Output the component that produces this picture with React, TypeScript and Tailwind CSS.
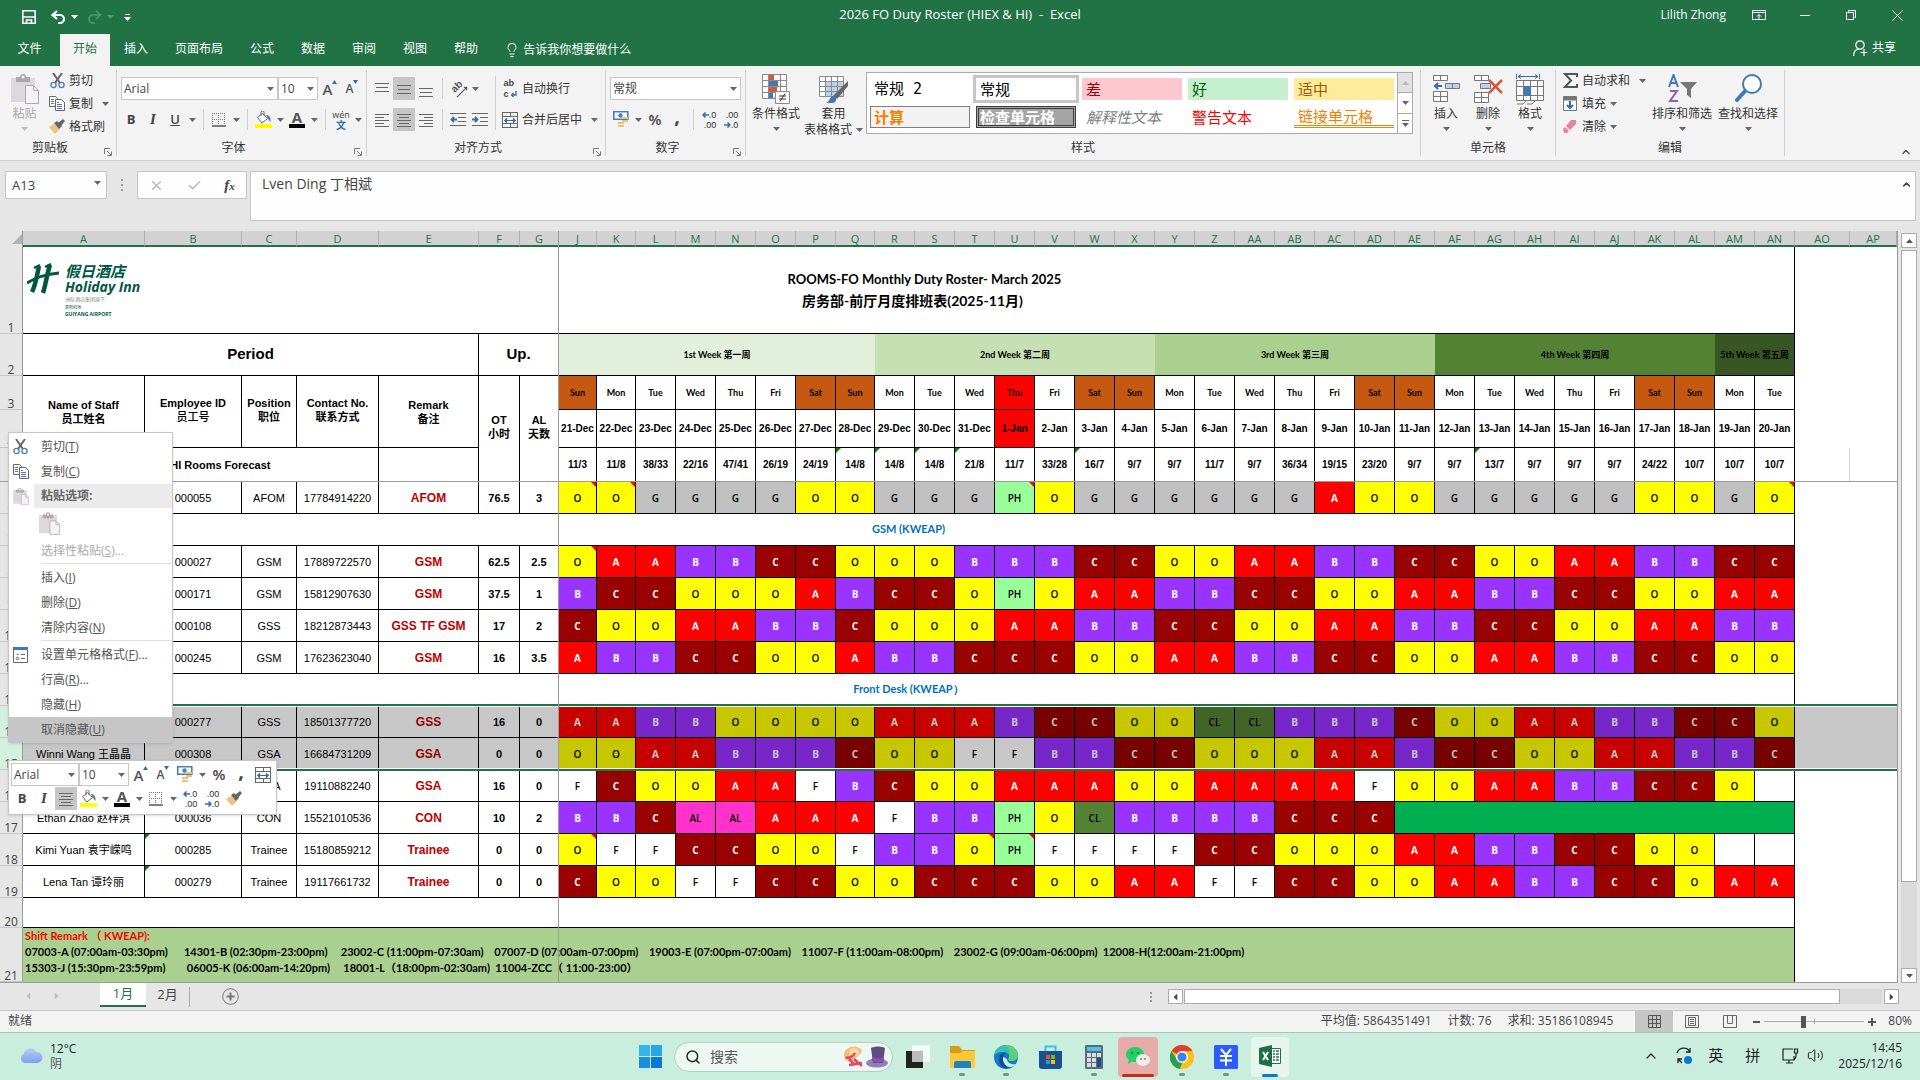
import React from "react";
import { ChevronUp, Lightbulb, Search, Volume2, X, Check } from "lucide-react";

/* ---------- data ---------- */

const cols = [
  "A", "B", "C", "D", "E", "F", "G", "J", "K", "L", "M", "N", "O", "P", "Q", "R", "S", "T", "U", "V", "W", "X",
  "Y", "Z", "AA", "AB", "AC", "AD", "AE", "AF", "AG", "AH", "AI", "AJ", "AK", "AL", "AM", "AN", "AO", "AP",
];

const dayNames = ["Sun", "Mon", "Tue", "Wed", "Thu", "Fri", "Sat"];
const days = Array.from({ length: 31 }, (_, i) => ({
  name: dayNames[i % 7],
  date: i < 11 ? `${21 + i}-Dec` : `${i - 10}-Jan`,
  holiday: i === 11,
}));

const forecast =
  "11/3 11/8 38/33 22/16 47/41 26/19 24/19 14/8 14/8 14/8 21/8 11/7 33/28 16/7 9/7 9/7 11/7 9/7 36/34 19/15 23/20 9/7 9/7 13/7 9/7 9/7 9/7 24/22 10/7 10/7 10/7".split(" ");
const forecastFlags = [7, 8, 9, 10, 13, 23];

const weeks = [
  { label: "1st Week 第一周", span: 8, cls: "bg-[#e2efda]" },
  { label: "2nd Week 第二周", span: 7, cls: "bg-[#c6e0b4]" },
  { label: "3rd Week 第三周", span: 7, cls: "bg-[#a9d08e]" },
  { label: "4th Week 第四周", span: 7, cls: "bg-[#548235]" },
  { label: "5th Week 第五周", span: 2, cls: "bg-[#375623]" },
];

const codeColors: Record<string, string> = {
  O: "bg-[#ffff00] text-black",
  G: "bg-[#c0c0c0] text-black",
  A: "bg-[#ff0000] text-white",
  B: "bg-[#9933ff] text-white",
  C: "bg-[#990000] text-white",
  F: "bg-white text-black",
  PH: "bg-[#99ff99] text-black",
  CL: "bg-[#548235] text-black",
  AL: "bg-[#ff33cc] text-black",
  _: "bg-white",
};

interface Staff {
  row: string;
  name: string;
  id: string;
  position: string;
  phone: string;
  remark: string;
  ot: string;
  al: string;
  shifts: string;
  notes?: number[];
  flag?: boolean;
  selected?: boolean;
  leave?: number;
}

const managers: Staff[] = [
  { row: "8", name: "", id: "000027", position: "GSM", phone: "17889722570", remark: "GSM", ot: "62.5", al: "2.5", notes: [0], shifts: "O A A B B C C O O O B B B C C O O A A B B C C O O A A B B C C" },
  { row: "9", name: "", id: "000171", position: "GSM", phone: "15812907630", remark: "GSM", ot: "37.5", al: "1", shifts: "B C C O O O A B C C O PH O A A B B C C O O A A B B C C O O A A" },
  { row: "10", name: "", id: "000108", position: "GSS", phone: "18212873443", remark: "GSS TF GSM", ot: "17", al: "2", shifts: "C O O A A B B C O O O A A B B C C O O A A B B C C O O A A B B" },
  { row: "11", name: "", id: "000245", position: "GSM", phone: "17623623040", remark: "GSM", ot: "16", al: "3.5", shifts: "A B B C C O O A B B C C C O O A A B B C C O O A A B B C C O O" },
];

const frontDesk: Staff[] = [
  { row: "13", name: "Lven Ding 丁相斌", id: "000277", position: "GSS", phone: "18501377720", remark: "GSS", ot: "16", al: "0", selected: true, shifts: "A A B B O O O O A A A B C C O O CL CL B B B C O O A A B B C C O" },
  { row: "15", name: "Winni Wang 王晶晶", id: "000308", position: "GSA", phone: "16684731209", remark: "GSA", ot: "0", al: "0", selected: true, shifts: "O O A A B B B C O O F F B B C C O O O A A B C C O O A A B B C" },
  { row: "16", name: "", id: "", position: "GSA", phone: "19110882240", remark: "GSA", ot: "16", al: "0", shifts: "F C O O A A F B C O O A A A O O A A A A F O O A A B B C C O _" },
  { row: "17", name: "Ethan Zhao 赵梓淇", id: "000036", position: "CON", phone: "15521010536", remark: "CON", ot: "10", al: "2", leave: 10, shifts: "B B C AL AL A A A F B B PH O CL B B B B C C C" },
  { row: "18", name: "Kimi Yuan 袁宇嵘鸣", id: "000285", position: "Trainee", phone: "15180859212", remark: "Trainee", ot: "0", al: "0", notes: [0, 10, 11], flag: true, shifts: "O F F C C O O F B B O PH F F F F C C O O O A A B B C C O O _ _" },
  { row: "19", name: "Lena Tan 谭玲丽", id: "000279", position: "Trainee", phone: "19117661732", remark: "Trainee", ot: "0", al: "0", flag: true, shifts: "C O O F F C C O O C C C O O A A F F C C O O A A B B C C O A A" },
];

const dutyManager: Staff = {
  row: "6", name: "", id: "000055", position: "AFOM", phone: "17784914220", remark: "AFOM", ot: "76.5", al: "3", notes: [0, 1, 11, 30],
  shifts: "O O G G G G O O G G G PH O G G G G G G A O O G G G G G O O G O",
};

/* ---------- small pieces ---------- */

const Caret = ({ className = "" }: { className?: string }) => (
  <svg width="7" height="4" viewBox="0 0 7 4" className={`shrink-0 ${className}`} fill="currentColor">
    <path d="M0 0h7L3.5 4z" />
  </svg>
);

const CaretButton = ({ label }: { label: string }) => (
  <button aria-label={label} className="flex h-[22px] w-3 shrink-0 items-center justify-center text-[#666]">
    <Caret />
  </button>
);

const Tool = ({ label, active, children }: { label: string; active?: boolean; children: React.ReactNode }) => (
  <button
    aria-label={label}
    className={`flex h-[23px] w-[22px] shrink-0 items-center justify-center text-[#444] ${active ? "bg-[#c6c6c6]" : ""}`}
  >
    {children}
  </button>
);

const Sep = () => <span className="mr-1 ml-[5px] h-[21px] w-px shrink-0 bg-[#d0d0d0]" />;

const Lines = ({ rows, align = "center" }: { rows: [number, number][]; align?: string }) => (
  <svg width="14" height="16" viewBox="0 0 14 16" stroke="#666" shapeRendering="crispEdges">
    {rows.map(([y, w]) => {
      const x = align === "left" ? 0 : align === "right" ? 14 - w : (14 - w) / 2;
      return <path key={y} d={`M${x} ${y}.5h${w}`} />;
    })}
  </svg>
);

const CutIcon = () => (
  <svg width="15" height="16" viewBox="0 0 15 16" fill="none">
    <path d="M3 0l7 10M12 0L5 10" stroke="#666" strokeWidth="2" />
    <circle cx="3.5" cy="12" r="2.6" stroke="#4a7ebb" strokeWidth="1.3" />
    <circle cx="11.5" cy="12" r="2.6" stroke="#4a7ebb" strokeWidth="1.3" />
  </svg>
);

const CopyIcon = () => (
  <svg width="16" height="15" viewBox="0 0 16 15" fill="#fff" stroke="#666">
    <path d="M.5.5h6l2 2v8h-8z" />
    <path d="M2 3.5h3M2 5.5h3M2 7.5h3" stroke="#4a7ebb" />
    <path d="M6.5 3.5h6l3 3v8h-9z" />
    <path d="M8 8.5h5M8 10.5h5M8 12.5h5M8 6.5h2" stroke="#4a7ebb" />
  </svg>
);

const BrushIcon = () => (
  <svg width="16" height="15" viewBox="0 0 16 15">
    <path d="M0 8l5-3 6 5-5 5z" fill="#ecc37e" />
    <path d="M5 4l3-2 5 5-3 3z" fill="#666" />
    <path d="M9 4l5-4 2 2-4 5z" fill="#666" />
  </svg>
);

const PasteIcon = ({ size = "large" }: { size?: "small" | "medium" | "large" }) => {
  const width = { small: 16, medium: 21, large: 28 }[size];
  return (
    <svg width={width} height={Math.round((width * 30) / 28)} viewBox="0 0 28 30">
      <path d="M0 4h24v24H0z" fill="#dcd8dc" />
      <path d="M5 3h4a3 3 0 016 0h4v5H5z" fill="#a9a9a9" />
      <circle cx="12" cy="3" r="1.5" fill="#f3f3f3" />
      <path d="M14.5 11.5h8l5 5v13h-13z" fill="#f7f0f7" stroke="#a9a9a9" />
      <path d="M22.5 11.5v5h5" fill="none" stroke="#a9a9a9" />
    </svg>
  );
};

const GrowFont = ({ down }: { down?: boolean }) => (
  <span className="flex h-[18px] items-end text-[#555]">
    <span className={`font-['Open_Sans',sans-serif] leading-[18px] font-semibold ${down ? "text-[12px]" : "text-[15px]"}`}>A</span>
    <svg width="5" height="4" viewBox="0 0 5 4" className="self-start" fill="#2f6fb5">
      <path d={down ? "M0 0h5L2.5 4z" : "M0 4h5L2.5 0z"} />
    </svg>
  </span>
);

const BorderIcon = () => (
  <svg width="14" height="14" viewBox="0 0 14 14" stroke="#777" fill="none">
    <path d="M.5 0v12M6.5 0v12M12.5 0v12M0 .5h13M0 6.5h13" strokeDasharray="1 1" />
    <path d="M0 13h14" stroke="#555" strokeWidth="1.5" />
  </svg>
);

const FillIcon = () => (
  <svg width="17" height="17" viewBox="0 0 17 17">
    <path d="M2.5 6.5l5-4 5 5-5.5 4.5z" fill="#fff" stroke="#666" />
    <path d="M6 5V1.5a1.5 1.5 0 013 0V5" fill="none" stroke="#666" />
    <path d="M11 4c3 0 5 2 4.5 7-1.5-1-2-3-3-4z" fill="#4a7ebb" />
    <path d="M0 13h17v4H0z" fill="#ff0" />
  </svg>
);

const FontColor = () => (
  <span className="flex flex-col items-center">
    <span className="h-[13px] font-['Open_Sans',sans-serif] text-[15px] leading-[13px] font-bold text-[#555]">A</span>
    <span className="h-1 w-4 bg-black" />
  </span>
);

const MoneyIcon = () => (
  <svg width="16" height="17" viewBox="0 0 16 17">
    <path d="M.8.8h14v7.5H.8z" fill="#fff" stroke="#4a7ebb" strokeWidth="1.6" />
    <circle cx="7.5" cy="4.5" r="2.2" fill="#4a7ebb" />
    <path d="M9 6h6v2H9zM9 9h6v2H9zM5 11h6v2H5zM5 14h6v2H5z" fill="#ecc37e" />
  </svg>
);

const Arrow = ({ right }: { right?: boolean }) => (
  <svg width="7" height="6" viewBox="0 0 7 6" className={right ? "rotate-180" : ""} fill="none" stroke="#2f6fb5" strokeWidth="1.5">
    <path d="M7 3H1M3.5.5L1 3l2.5 2.5" />
  </svg>
);

const Decimal = ({ up }: { up?: boolean }) => (
  <span className="flex flex-col items-end font-['Liberation_Sans',sans-serif] text-[9px] leading-[10px] text-[#333]">
    <span className="flex items-center">
      {up && <Arrow />}
      {up ? ".0" : ".00"}
    </span>
    <span className="flex items-center">
      {!up && <Arrow right />}
      {up ? ".00" : ".0"}
    </span>
  </span>
);

const MergeIcon = () => (
  <svg width="16" height="16" viewBox="0 0 16 16" fill="none" stroke="#666" shapeRendering="crispEdges">
    <path d="M.5.5h15v15H.5zM.5 4.5h15M.5 11.5h15M8 .5v4M8 11.5v4" />
    <path d="M3 8.5h10M5 6.5l-2 2 2 2M11 6.5l2 2-2 2" stroke="#2f6fb5" />
  </svg>
);

const WrapIcon = () => (
  <span className="flex flex-col items-start font-['Liberation_Sans',sans-serif] text-[9px] leading-[11px] font-bold text-[#444]">
    <span>ab</span>
    <span className="flex items-center gap-px">
      c
      <svg width="7" height="7" viewBox="0 0 7 7" fill="none" stroke="#2f6fb5" strokeWidth="1.3">
        <path d="M6 0v4H1.500M3.500 2l-2 2 2 2" />
      </svg>
    </span>
  </span>
);

const IndentIcon = ({ out }: { out?: boolean }) => (
  <svg width="16" height="14" viewBox="0 0 16 14" stroke="#666" fill="none">
    <path d="M0 .5h16M8 4.5h8M8 8.5h8M0 12.5h16" />
    <path d={out ? "M1 6.5h6M4 4L1.5 6.5 4 9" : "M0 6.5h6M3 4l2.5 2.5L3 9"} stroke="#2f6fb5" strokeWidth="1.8" />
  </svg>
);

const Launcher = ({ label }: { label: string }) => (
  <button aria-label={label} className="absolute right-1 bottom-0">
    <svg width="8" height="8" viewBox="0 0 8 8" stroke="#777" fill="none">
      <path d="M.5 6V.5H6M3 3l4 4M7.5 3.5v4h-4" />
    </svg>
  </button>
);

const Group = ({ title, width, launcher, children }: { title: string; width: string; launcher?: boolean; children: React.ReactNode }) => (
  <section className={`relative flex h-[86px] shrink-0 flex-col border-r border-[#d0d0d0] ${width}`}>
    <div className="flex h-[73px]">{children}</div>
    <h2 className={`text-center text-[12px] leading-4 text-[#333] ${launcher ? "pr-4" : ""}`}>{title}</h2>
    {launcher && <Launcher label={`${title}设置`} />}
  </section>
);

const SmallCommand = ({ icon, text, caret, wide }: { icon: React.ReactNode; text: string; caret?: boolean; wide?: boolean }) => (
  <button className="flex h-[23px] items-center text-[12px] whitespace-nowrap text-[#333]">
    <span className="mr-1 flex w-4 justify-center">{icon}</span>
    {text}
    {caret && <Caret className={wide ? "ml-[9px] text-[#666]" : "ml-1 text-[#666]"} />}
  </button>
);

const BigCommand = ({ icon, text, width, muted }: { icon: React.ReactNode; text: string; width: string; muted?: boolean }) => (
  <button className={`flex shrink-0 flex-col items-center justify-start pt-1 text-[12px] leading-4 whitespace-nowrap ${width} ${muted ? "text-[#aaa]" : "text-[#333]"}`}>
    <span className="flex h-8 items-start">{icon}</span>
    {text}
    <Caret className={`mt-[5px] ${muted ? "text-[#c0c0c0]" : "text-[#666]"}`} />
  </button>
);

const FakeSelect = ({ label, value, width }: { label: string; value: string; width: string }) => (
  <span className={`relative flex h-[23px] shrink-0 items-center ${width}`}>
    <select
      aria-label={label}
      className="h-full w-full appearance-none border border-[#c6c6c6] bg-white px-[2px] text-[12px] leading-4 text-[#444]"
    >
      <option>{value}</option>
    </select>
    <Caret className="pointer-events-none absolute right-1 text-[#666]" />
  </span>
);

/* ---------- title bar and ribbon ---------- */

const TitleBar = () => (
  <header className="grid h-[34px] grid-cols-[1fr_auto_1fr] items-start bg-[#217346] text-white">
    <div className="flex h-[34px] items-center pl-[22px]">
      <button aria-label="保存">
        <svg width="14" height="14" viewBox="0 0 14 14" fill="none" stroke="#fff" strokeWidth="1.6">
          <path d="M.8.8h12.4v12.4H.8zM1 7h12M4.5 13v-3h5v3" />
        </svg>
      </button>
      <button aria-label="撤消" className="ml-[15px] flex items-center">
        <svg width="15" height="14" viewBox="0 0 15 14" fill="none" stroke="#fff" strokeWidth="2.2">
          <path d="M6 1L1.5 5 6 9M2 5h7a4 4 0 010 8H7" />
        </svg>
        <Caret className="ml-[5px]" />
      </button>
      <button aria-label="恢复" className="ml-[9px] flex items-center text-[#4f9a72]">
        <svg width="15" height="14" viewBox="0 0 15 14" fill="none" stroke="currentColor" strokeWidth="1.6">
          <path d="M9 1l4.5 4L9 9M13 5H6a4 4 0 000 8h2" />
        </svg>
        <Caret className="ml-[5px]" />
      </button>
      <button aria-label="自定义快速访问工具栏" className="ml-[10px] flex flex-col items-center gap-[2px]">
        <span className="h-px w-[5px] bg-white" />
        <Caret />
      </button>
    </div>
    <h1 className="mt-[5px] text-[13px] leading-[18px] whitespace-pre">2026 FO Duty Roster (HIEX &amp; HI)  -  Excel</h1>
    <div className="flex h-[30px] items-center justify-end pr-[17px]">
      <span className="mr-[26px] text-[12px]">Lilith Zhong</span>
      <button aria-label="功能区显示选项" className="mr-[34px]">
        <svg width="14" height="10" viewBox="0 0 14 10" fill="none" stroke="#fff">
          <path d="M.5.5h13v9H.5zM.5 2.5h13M7 9V4.5M5 6.5l2-2 2 2" />
        </svg>
      </button>
      <button aria-label="最小化" className="mr-9 h-px w-[10px] bg-white" />
      <button aria-label="还原" className="mr-9">
        <svg width="10" height="10" viewBox="0 0 10 10" fill="none" stroke="#fff">
          <path d="M.5 2.5h7v7h-7zM2.5 2.5v-2h7v7h-2" />
        </svg>
      </button>
      <button aria-label="关闭">
        <svg width="11" height="11" viewBox="0 0 11 11" stroke="#fff">
          <path d="M.5.5l10 10M10.5.5l-10 10" />
        </svg>
      </button>
    </div>
  </header>
);

const ribbonTabs = ["开始", "插入", "页面布局", "公式", "数据", "审阅", "视图", "帮助"];

const RibbonTabs = () => (
  <nav className="flex h-8 items-stretch gap-px bg-[#217346] text-[12px] text-white">
    <button className="w-[59px] pb-[2px]">文件</button>
    {ribbonTabs.map((t) => (
      <button key={t} className={`px-[13px] pb-[2px] ${t === "开始" ? "bg-[#f3f3f3] text-[#217346]" : ""}`}>
        {t}
      </button>
    ))}
    <button className="flex items-center pl-3">
      <Lightbulb size={16} strokeWidth={1.5} className="mr-[3px]" />
      告诉我你想要做什么
    </button>
    <button className="mr-6 ml-auto flex items-center gap-1 pb-1">
      <svg width="15" height="17" viewBox="0 0 15 17" fill="none" stroke="#fff" strokeWidth="1.2">
        <circle cx="7" cy="5" r="4.2" />
        <path d="M.6 16c0-4 2-6.5 5-7M11 9v7M7.5 12.5h7" />
      </svg>
      共享
    </button>
  </nav>
);

const Gallery = () => (
  <div className="mt-[2px] ml-[5px] flex h-[62px] border border-[#ababab] bg-white font-['Noto_Sans_CJK_SC',sans-serif] text-[15px] leading-5">
    <div className="grid grid-cols-5 gap-x-[6px] gap-y-[6px] px-[3px] py-[5px]">
      <button className="h-[22px] w-[100px] px-1 text-left font-['DejaVu_Sans_Mono','Noto_Sans_CJK_SC',monospace] text-black">常规 2</button>
      <button className="h-[22px] w-[100px] px-1 text-left text-black outline-[3px] outline-[#c6c6c6]">常规</button>
      <button className="h-[22px] w-[100px] bg-[#ffc7ce] px-1 text-left text-[#9c0006]">差</button>
      <button className="h-[22px] w-[100px] bg-[#c6efce] px-1 text-left text-[#006100]">好</button>
      <button className="h-[22px] w-[100px] bg-[#ffeb9c] px-1 text-left text-[#9c5700]">适中</button>
      <button className="h-[22px] w-[100px] border border-[#7f7f7f] bg-[#f2f2f2] px-[3px] text-left leading-4 font-bold text-[#fa7d00]">计算</button>
      <button className="h-[22px] w-[100px] border-3 border-double border-[#3f3f3f] bg-[#a5a5a5] px-px text-left leading-4 font-bold text-white">检查单元格</button>
      <button className="h-[22px] w-[100px] px-1 text-left leading-4 text-[#7f7f7f] italic">解释性文本</button>
      <button className="h-[22px] w-[100px] px-1 text-left leading-4 text-[#ff0000]">警告文本</button>
      <button className="h-[22px] w-[100px] border-b-3 border-double border-[#ff8001] px-1 text-left leading-4 text-[#fa7d00]">链接单元格</button>
    </div>
    <div className="flex w-[15px] flex-col border-l border-[#ababab] text-[#666]">
      <button aria-label="上一行" className="flex flex-1 items-center justify-center border-b border-[#ababab] bg-[#e1e1e1] text-[#bbb]">
        <Caret className="rotate-180" />
      </button>
      <button aria-label="下一行" className="flex flex-1 items-center justify-center border-b border-[#ababab]">
        <Caret />
      </button>
      <button aria-label="其他" className="flex flex-1 flex-col items-center justify-center gap-[2px]">
        <span className="h-px w-[7px] bg-[#666]" />
        <Caret />
      </button>
    </div>
  </div>
);

const Ribbon = () => (
  <div className="flex h-[95px] border-b border-[#d0d0d0] bg-[#f3f3f3] pt-1">
    <Group title="剪贴板" width="w-[117px]" launcher>
      <BigCommand width="w-[49px]" muted text="粘贴" icon={<PasteIcon />} />
      <div className="-mt-px flex flex-col items-start">
        <SmallCommand icon={<CutIcon />} text="剪切" />
        <SmallCommand icon={<CopyIcon />} text="复制" caret wide />
        <SmallCommand icon={<BrushIcon />} text="格式刷" />
      </div>
    </Group>

    <Group title="字体" width="w-[250px]" launcher>
      <div className="flex flex-col gap-2 pt-[7px] pl-1">
        <div className="flex items-center">
          <FakeSelect label="字体" value="Arial" width="w-[157px]" />
          <FakeSelect label="字号" value="10" width="w-10" />
          <span className="w-px" />
          <Tool label="增大字号"><GrowFont /></Tool>
          <Tool label="减小字号"><GrowFont down /></Tool>
        </div>
        <div className="-ml-px flex items-center">
          <Tool label="加粗"><b className="text-[13px]">B</b></Tool>
          <Tool label="倾斜"><i className="font-['Liberation_Serif',serif] text-[15px] font-bold">I</i></Tool>
          <Tool label="下划线"><span className="text-[13px] font-semibold underline">U</span></Tool>
          <CaretButton label="下划线选项" />
          <Sep />
          <Tool label="边框"><BorderIcon /></Tool>
          <CaretButton label="边框选项" />
          <Sep />
          <Tool label="填充颜色"><FillIcon /></Tool>
          <CaretButton label="填充颜色选项" />
          <Tool label="字体颜色"><FontColor /></Tool>
          <CaretButton label="字体颜色选项" />
          <Sep />
          <Tool label="拼音">
            <span className="flex flex-col items-center text-[9px] leading-[11px]">
              wén<b className="text-[10px] leading-[11px] text-[#2f6fb5]">文</b>
            </span>
          </Tool>
          <CaretButton label="拼音选项" />
        </div>
      </div>
    </Group>

    <Group title="对齐方式" width="w-[239px]" launcher>
      <div className="flex flex-col gap-2 pt-[7px] pl-1">
        <div className="flex items-center">
          <Tool label="顶端对齐"><Lines rows={[[2, 14], [6, 12], [10, 14]]} /></Tool>
          <Tool label="垂直居中" active><Lines rows={[[4, 14], [8, 12], [12, 14]]} /></Tool>
          <Tool label="底端对齐"><Lines rows={[[7, 14], [11, 12], [15, 14]]} /></Tool>
          <Sep />
          <Tool label="方向">
            <span className="flex -rotate-45 flex-col items-center font-['Liberation_Sans',sans-serif] text-[10px] leading-[10px] font-bold text-[#555]">
              ab
              <svg width="15" height="5" viewBox="0 0 15 5" fill="none" stroke="#555" strokeWidth="1.2">
                <path d="M0 2.5h14M12 .5l2 2-2 2" />
              </svg>
            </span>
          </Tool>
          <CaretButton label="方向选项" />
        </div>
        <div className="flex items-center">
          <Tool label="左对齐"><Lines align="left" rows={[[2, 14], [5, 9], [8, 14], [11, 9], [14, 14]]} /></Tool>
          <Tool label="居中" active><Lines rows={[[2, 14], [5, 10], [8, 14], [11, 10], [14, 14]]} /></Tool>
          <Tool label="右对齐"><Lines align="right" rows={[[2, 14], [5, 9], [8, 14], [11, 9], [14, 14]]} /></Tool>
          <Sep />
          <Tool label="减少缩进量"><IndentIcon out /></Tool>
          <Tool label="增加缩进量"><IndentIcon /></Tool>
        </div>
      </div>
      <span className="mt-[6px] ml-1 h-[54px] w-px bg-[#d0d0d0]" />
      <div className="ml-[6px] flex flex-col items-start gap-2 pt-[7px]">
        <SmallCommand text="自动换行" icon={<WrapIcon />} />
        <SmallCommand text="合并后居中" icon={<MergeIcon />} caret wide />
      </div>
    </Group>

    <Group title="数字" width="w-[140px]" launcher>
      <div className="flex flex-col gap-2 pt-[7px] pl-1">
        <FakeSelect label="数字格式" value="常规" width="w-[131px]" />
        <div className="flex items-center">
          <Tool label="会计数字格式"><MoneyIcon /></Tool>
          <CaretButton label="会计数字格式选项" />
          <Tool label="百分比样式"><span className="text-[15px] font-semibold">%</span></Tool>
          <Tool label="千位分隔样式"><span className="pb-2 text-[20px] leading-3 font-bold">,</span></Tool>
          <Sep />
          <Tool label="增加小数位数"><Decimal up /></Tool>
          <Tool label="减少小数位数"><Decimal /></Tool>
        </div>
      </div>
    </Group>

    <Group title="样式" width="w-[675px]">
      <BigCommand
        width="w-[60px]"
        text="条件格式"
        icon={
          <svg width="30" height="30" viewBox="0 0 30 30" stroke="#8a8a8a" fill="#fff">
            <path d="M1.5.5h24v24h-24z" />
            <path d="M8 1h5v5H8zM8 13h8v5H8z" fill="#d2593c" stroke="none" />
            <path d="M8 7h9v5H8zM8 19h4v5H8z" fill="#3f79ba" stroke="none" />
            <path d="M1.5 6.5h24M1.5 12.5h24M1.5 18.5h24M7.5.5v24M19.5.5v24" fill="none" />
            <path d="M14.5 17.5h14v12h-14z" />
            <path d="M18 22h7M18 25h7M24 19.5l-5 8" stroke="#333" />
          </svg>
        }
      />
      <button className="flex w-[55px] flex-col items-center justify-start pt-1 text-[12px] leading-4 whitespace-nowrap text-[#333]">
        <span className="flex h-8 items-start">
          <svg width="30" height="30" viewBox="0 0 30 30" stroke="#8a8a8a" fill="#fff">
            <path d="M.5 2.5h24v20H.5z" />
            <path d="M7 8h17v14H7z" fill="#bdd2ea" stroke="none" />
            <path d="M.5 7.5h24M.5 12.5h24M.5 17.5h24M6.5 2.5v20M12.5 2.5v20M18.5 2.5v20" fill="none" />
            <path d="M29 7v5L18 25l-4-3z" fill="#666" stroke="none" />
            <path d="M7 29c4-1 3-7 8-7 3 2 3 6-1 7z" fill="#3f79ba" stroke="none" />
          </svg>
        </span>
        套用
        <span className="flex items-center gap-1">
          表格格式
          <Caret className="text-[#666]" />
        </span>
      </button>
      <Gallery />
    </Group>

    <Group title="单元格" width="w-[135px]">
      <span className="w-1" />
      <BigCommand
        width="w-[42px]"
        text="插入"
        icon={
          <svg width="27" height="30" viewBox="0 0 27 30" stroke="#777" fill="#fff">
            <path d="M.5 1.5h14v5H.5zM7.5 1.5v5M.5 17.5h14v10H.5zM7.5 17.5v10M.5 22.5h14" />
            <path d="M12.5 9.5h14v5h-14zM19.5 9.5v5" fill="#bdd2ea" />
            <path d="M9 12H2M5 9l-3 3 3 3" stroke="#2f6fb5" strokeWidth="2" fill="none" />
          </svg>
        }
      />
      <BigCommand
        width="w-[42px]"
        text="删除"
        icon={
          <svg width="29" height="30" viewBox="0 0 29 30" stroke="#777" fill="#fff">
            <path d="M.5 1.5h14v5H.5zM7.5 1.5v5M.5 18.5h14v10H.5zM7.5 18.5v10M.5 23.5h14" />
            <path d="M6.5 9.5h10v5h-10z" fill="#bdd2ea" />
            <path d="M15 6l13 13M28 6L15 19" stroke="#d9573b" strokeWidth="2.5" />
          </svg>
        }
      />
      <BigCommand
        width="w-[42px]"
        text="格式"
        icon={
          <svg width="28" height="32" viewBox="0 0 28 32" stroke="#777" fill="#fff">
            <path d="M.5 6.5h27v20H.5zM.5 12.5h27M.5 21.5h27M7.5 6.5v20M14.5 6.5v20M21.5 6.5v20" />
            <path d="M8 12h7v10H8z" fill="#3f79ba" stroke="none" />
            <path d="M1 30h6l3-3M11 30h5l3-3" fill="none" />
            <path d="M.5 0v5M23.5 0v5M2 2.5h20M5 .5l-3 2 3 2M19 .5l3 2-3 2" stroke="#2f6fb5" fill="none" />
          </svg>
        }
      />
    </Group>

    <Group title="编辑" width="w-[229px]">
      <div className="-mt-px flex w-[88px] flex-col items-start pl-[6px]">
        <SmallCommand
          text="自动求和"
          caret
          wide
          icon={
            <svg width="15" height="15" viewBox="0 0 15 15" fill="none" stroke="#555" strokeWidth="2">
              <path d="M14 4V1H2l6 6.5L2 14h12v-3" />
            </svg>
          }
        />
        <SmallCommand
          text="填充"
          caret
          icon={
            <svg width="14" height="15" viewBox="0 0 14 15" fill="#fff" stroke="#777">
              <path d="M.5.5h13v14H.5z" />
              <path d="M1 1h12v3H1z" fill="#777" />
              <path d="M7 5v7M4 9l3 3 3-3" stroke="#2f6fb5" strokeWidth="2" fill="none" />
            </svg>
          }
        />
        <SmallCommand
          text="清除"
          caret
          icon={
            <svg width="14" height="13" viewBox="0 0 14 13">
              <path d="M8 0h5v4L7 10 3 6z" fill="#e8849a" />
              <path d="M2 7l4 4-2 2H1L0 9z" fill="#e8849a" />
            </svg>
          }
        />
      </div>
      <BigCommand
        width="w-[76px]"
        text="排序和筛选"
        icon={
          <svg width="29" height="29" viewBox="0 0 29 29" fill="none" strokeWidth="2">
            <path d="M1 13L5.5 1 10 13M2.5 9h6" stroke="#3f79ba" />
            <path d="M2 17h7l-7 10h8" stroke="#8d5fb5" />
            <path d="M12 8h17l-6 7v9l-4-3v-6z" fill="#777" />
          </svg>
        }
      />
      <BigCommand
        width="w-[56px]"
        text="查找和选择"
        icon={
          <svg width="27" height="28" viewBox="0 0 27 28" fill="#fff">
            <path d="M2 26l9-10" stroke="#3f79ba" strokeWidth="4" strokeLinecap="round" />
            <circle cx="17" cy="10" r="9" stroke="#3f79ba" strokeWidth="2" />
          </svg>
        }
      />
    </Group>
    <button aria-label="折叠功能区" className="mr-2 mb-[2px] ml-auto self-end text-[#555]">
      <ChevronUp size={12} strokeWidth={3} />
    </button>
  </div>
);

const FormulaBar = () => (
  <div className="flex items-start bg-[#e6e6e6] py-[10px] pr-1 pl-[5px] text-[#444]">
    <div className="relative flex h-7 w-[102px] items-center">
      <input aria-label="名称框" defaultValue="A13" className="h-full w-full border border-[#c6c6c6] bg-[#fdfdfd] px-[6px] text-[13px]" />
      <Caret className="pointer-events-none absolute right-[6px] mb-1 text-[#666]" />
    </div>
    <span className="flex h-7 w-[30px] flex-col items-center justify-center gap-[3px]">
      <i className="size-[2px] bg-[#999]" />
      <i className="size-[2px] bg-[#999]" />
      <i className="size-[2px] bg-[#999]" />
    </span>
    <div className="flex h-7 w-[110px] items-center justify-around border border-[#c6c6c6] bg-[#fdfdfd]">
      <button aria-label="取消" className="text-[#bbb]"><X size={15} strokeWidth={2.5} /></button>
      <button aria-label="输入" className="text-[#bbb]"><Check size={15} strokeWidth={2.5} /></button>
      <button aria-label="插入函数" className="font-['Liberation_Serif',serif] text-[15px] leading-4 font-bold italic">
        f<span className="text-[11px]">x</span>
      </button>
    </div>
    <div className="ml-[3px] flex h-[50px] flex-1 items-start border border-[#c6c6c6] bg-[#fdfdfd]">
      <textarea
        aria-label="编辑栏"
        defaultValue="Lven Ding 丁相斌"
        className="h-full flex-1 resize-none px-[11px] pt-[3px] text-[14px] leading-[18px] outline-none"
      />
      <ChevronUp size={11} strokeWidth={3.5} className="mt-[7px] mr-[3px]" />
    </div>
  </div>
);

/* ---------- sheet ---------- */

const cell = "border-r border-b border-black text-center";

const RowHead = ({ n, selected }: { n: string; selected?: boolean }) => (
  <th
    scope="row"
    className={`border-r border-b border-r-[#9b9b9b] border-b-[#c6c6c6] text-center align-bottom font-['Open_Sans',sans-serif] text-[12px] leading-[11px] font-normal ${
      selected ? "bg-[#d3f0e0] text-[#217346]" : "bg-[#e6e6e6] text-[#444]"
    }`}
  >
    {n}
  </th>
);

const Outside = () => (
  <>
    <td />
    <td />
  </>
);

const GreenFlag = () => (
  <span className="absolute top-0 left-0 border-t-[5px] border-r-[5px] border-t-[#0a7d0a] border-r-transparent" />
);

const RedFlag = () => (
  <span className="absolute top-0 right-0 border-t-[5px] border-l-[5px] border-t-[#ff0000] border-l-transparent" />
);

const StaffRow = ({ s }: { s: Staff }) => (
  <tr className="h-8 font-['Liberation_Sans','Noto_Sans_CJK_SC',sans-serif] text-[11px] leading-[14px] text-black">
    <RowHead n={s.row} selected={s.selected} />
    <td className={cell}>{s.name}</td>
    <td className={`relative ${cell}`}>
      {s.flag && <GreenFlag />}
      {s.id}
    </td>
    <td className={cell}>{s.position}</td>
    <td className={cell}>{s.phone}</td>
    <td className={`text-[12px] font-bold text-[#c00000] ${cell}`}>{s.remark}</td>
    <td className={`font-bold ${cell}`}>{s.ot}</td>
    <td className={`font-bold ${cell}`}>{s.al}</td>
    {s.shifts.split(" ").map((c, i) => (
      <td
        key={i}
        className={`relative font-['Open_Sans',sans-serif] text-[10px] ${"ABC".includes(c) ? "font-bold" : "font-semibold"} ${cell} ${codeColors[c]}`}
      >
        {c === "_" ? "" : c}
        {s.notes?.includes(i) && <RedFlag />}
      </td>
    ))}
    {s.leave && <td colSpan={s.leave} className={`bg-[#00b050] ${cell}`} />}
    <Outside />
  </tr>
);

const SectionRow = ({ n, title }: { n: string; title: string }) => (
  <tr className="h-8">
    <RowHead n={n} />
    <td colSpan={38} className={`font-['Lato',sans-serif] text-[11px] font-bold text-[#0070c0] ${cell}`}>
      {title}
    </td>
    <Outside />
  </tr>
);

const HotelLogo = () => (
  <div className="flex items-start gap-[6px] text-[#00573f]">
    <svg width="32" height="32" viewBox="0 0 32 32" fill="none" stroke="currentColor">
      <path d="M12 3C10 12 9 21 5 29" strokeWidth="4.5" />
      <path d="M23 2c-3 9-4 18-7 28" strokeWidth="4.5" />
      <path d="M0 20c8-5 19-9 32-10" strokeWidth="3" />
      <path d="M7 5l6-3M18 4l6-3" strokeWidth="2.5" />
    </svg>
    <div className="flex flex-col text-left">
      <span className="font-['Noto_Sans_CJK_SC',sans-serif] text-[15px] leading-4 font-bold italic">假日酒店</span>
      <span className="font-['Open_Sans',sans-serif] text-[14px] leading-[15px] font-bold whitespace-nowrap italic">Holiday Inn</span>
      <span className="font-['Noto_Sans_CJK_SC',sans-serif] text-[5px] leading-[9px] text-[#888]">洲际酒店集团旗下</span>
      <span className="font-['Noto_Sans_CJK_SC',sans-serif] text-[4px] leading-[9px]">贵阳机场</span>
      <span className="font-['Open_Sans',sans-serif] text-[5px] leading-[5px] font-bold">GUIYANG AIRPORT</span>
    </div>
  </div>
);

const headLabel = `font-['Liberation_Sans','Noto_Sans_CJK_SC',sans-serif] text-[11px] leading-[14px] font-bold ${cell}`;

const Sheet = () => (
  <div className="relative min-w-0 flex-1 overflow-hidden border-r border-b border-[#9b9b9b] bg-white">
    <table className="w-full table-fixed border-separate border-spacing-0">
      <colgroup>
        <col className="w-[23px]" />
        <col className="w-[122px]" />
        <col className="w-[97px]" />
        <col className="w-[55px]" />
        <col className="w-[82px]" />
        <col className="w-[100px]" />
        <col className="w-[41px]" />
        <col className="w-[39px]" />
        <col className="w-[38px]" />
        <col className="w-[39px]" />
        <col span={5} className="w-10" />
        <col className="w-[39px]" />
        <col span={23} className="w-10" />
        <col className="w-[55px]" />
        <col />
      </colgroup>
      <thead>
        <tr className="h-4 font-['Open_Sans',sans-serif] text-[11px] leading-[14px] text-[#217346]">
          <th className="border-r border-[#9b9b9b] bg-[#e6e6e6]">
            <svg width="10" height="10" viewBox="0 0 10 10" className="ml-auto" fill="#b3b3b3">
              <path d="M10 0v10H0z" />
            </svg>
          </th>
          {cols.map((c) => (
            <th key={c} scope="col" className="border-r border-b-2 border-r-[#b0b0b0] border-b-[#217346] bg-[#d2d2d2] p-0 pt-px leading-[13px] font-normal">
              {c}
            </th>
          ))}
        </tr>
      </thead>
      <tbody>
        <tr className="h-[87px]">
          <RowHead n="1" />
          <td className="border-b border-black pt-4 pl-1 align-top">
            <HotelLogo />
          </td>
          <td colSpan={37} className="border-r border-b border-black pr-[122px] text-center font-['Lato','Noto_Sans_CJK_SC',sans-serif] text-[13px] leading-[21px] font-bold text-black">
            <p className="pl-8">ROOMS-FO Monthly Duty Roster- March 2025</p>
            <p className="pl-2 text-[14px]">房务部-前厅月度排班表(2025-11月)</p>
          </td>
          <Outside />
        </tr>
        <tr className="h-[42px] text-black">
          <RowHead n="2" />
          <td colSpan={5} className={`font-['Liberation_Sans',sans-serif] text-[15px] font-bold ${cell}`}>Period</td>
          <td colSpan={2} className={`font-['Liberation_Sans',sans-serif] text-[15px] font-bold ${cell}`}>Up.</td>
          {weeks.map((w, i) => (
            <td
              key={w.label}
              colSpan={w.span}
              className={`border-b border-black text-center font-['Lato','Noto_Sans_CJK_SC',sans-serif] text-[9px] font-bold whitespace-nowrap ${i === 4 ? "border-r" : ""} ${w.cls}`}
            >
              {w.label}
            </td>
          ))}
          <Outside />
        </tr>
        <tr className="h-[34px] text-black">
          <RowHead n="3" />
          <td rowSpan={2} className={headLabel}>Name of Staff<br />员工姓名</td>
          <td rowSpan={2} className={`pb-1 ${headLabel}`}>Employee ID<br /><span className="font-medium">员工号</span></td>
          <td rowSpan={2} className={`pb-1 ${headLabel}`}>Position<br />职位</td>
          <td rowSpan={2} className={`pb-1 ${headLabel}`}>Contact No.<br />联系方式</td>
          <td rowSpan={2} className={headLabel}>Remark<br />备注</td>
          <td rowSpan={3} className={`pb-1 ${headLabel}`}>OT<br />小时</td>
          <td rowSpan={3} className={`pb-1 ${headLabel}`}>AL<br />天数</td>
          {days.map((d) => (
            <td
              key={d.date}
              className={`font-['Lato',sans-serif] text-[9px] font-bold ${cell} ${
                d.holiday ? "bg-[#ff0000]" : d.name === "Sat" || d.name === "Sun" ? "bg-[#c65911]" : "bg-white"
              }`}
            >
              {d.name}
            </td>
          ))}
          <Outside />
        </tr>
        <tr className="h-[38px] text-black">
          <RowHead n="4" />
          {days.map((d) => (
            <td
              key={d.date}
              className={`font-['Liberation_Sans',sans-serif] text-[10px] font-bold whitespace-nowrap ${cell} ${d.holiday ? "bg-[#ff0000]" : ""}`}
            >
              {d.date}
            </td>
          ))}
          <Outside />
        </tr>
        <tr className="h-[34px] text-black">
          <RowHead n="5" />
          <td colSpan={4} className={headLabel}>HIEX &amp; HI Rooms Forecast</td>
          <td className={cell} />
          {forecast.map((f, i) => (
            <td key={i} className={`relative font-['Liberation_Sans',sans-serif] text-[10px] font-bold ${cell}`}>
              {forecastFlags.includes(i) && <GreenFlag />}
              {f}
            </td>
          ))}
          <td className="border-r border-[#d4d4d4]" />
          <td />
        </tr>
        <StaffRow s={dutyManager} />
        <SectionRow n="7" title="GSM (KWEAP)" />
        {managers.map((s) => (
          <StaffRow key={s.row} s={s} />
        ))}
        <SectionRow n="12" title="Front Desk (KWEAP）" />
        {frontDesk.map((s) => (
          <StaffRow key={s.row} s={s} />
        ))}
        <tr className="h-[30px]">
          <RowHead n="20" />
          <td colSpan={38} className={cell} />
          <Outside />
        </tr>
        <tr className="h-[54px]">
          <RowHead n="21" />
          <td colSpan={38} className="overflow-hidden border-r border-black bg-[#a9d08e] pl-[2px] text-left align-top font-['Lato','Noto_Sans_CJK_SC',sans-serif] text-[11px] leading-4 font-bold whitespace-pre text-black">
            <p className="text-[#ff0000]">Shift Remark （ KWEAP):</p>
            <p>07003-A (07:00am-03:30pm)      14301-B (02:30pm-23:00pm)     23002-C (11:00pm-07:30am)    07007-D (07:00am-07:00pm)    19003-E (07:00pm-07:00am)    11007-F (11:00am-08:00pm)    23002-G (09:00am-06:00pm)  12008-H(12:00am-21:00pm)</p>
            <p>15303-J (15:30pm-23:59pm)        06005-K (06:00am-14:20pm)     18001-L（18:00pm-02:30am)  11004-ZCC（ 11:00-23:00）</p>
          </td>
          <Outside />
        </tr>
      </tbody>
    </table>
    {/* selected rows */}
    <div className="pointer-events-none absolute top-[473px] right-0 left-[23px] h-[67px] border-y-2 border-[#217346]">
      <div className="h-full border-y border-white bg-black/22" />
    </div>
    {/* frozen panes */}
    <div className="pointer-events-none absolute top-0 bottom-0 left-[558px] w-px bg-[#9b9b9b]" />
    <div className="pointer-events-none absolute top-[250px] right-0 left-0 h-px bg-[#9b9b9b]" />
  </div>
);

const VerticalScroll = () => (
  <div className="flex w-[22px] flex-col bg-[#e6e6e6] pt-[2px] pr-[3px] pl-[3px] text-[#555]">
    <button aria-label="向上滚动" className="flex h-[15px] items-center justify-center border border-[#ababab] bg-white">
      <Caret className="rotate-180" />
    </button>
    <div className="mt-[2px] flex flex-1 flex-col bg-[#dadada]">
      <div className="h-[88%] border border-[#ababab] bg-white" />
    </div>
    <button aria-label="向下滚动" className="flex h-[15px] items-center justify-center border border-[#ababab] bg-white">
      <Caret />
    </button>
  </div>
);

const SheetTabs = () => (
  <div className="flex h-[27px] items-start bg-[#e6e6e6] text-[13px] text-[#444]">
    <div className="flex h-[26px] w-[100px] items-center gap-[21px] pl-[25px] text-[#bbb]">
      <button aria-label="上一个工作表"><Caret className="rotate-90" /></button>
      <button aria-label="下一个工作表"><Caret className="-rotate-90" /></button>
    </div>
    <button className="h-6 w-[46px] border-b-2 border-[#217346] bg-white text-[#217346]">1月</button>
    <button className="h-6 w-[43px]">2月</button>
    <span className="mt-1 h-5 w-px bg-[#ababab]" />
    <button aria-label="新工作表" className="mt-[5px] ml-8">
      <svg width="17" height="17" viewBox="0 0 17 17" fill="none" stroke="#777">
        <circle cx="8.5" cy="8.5" r="7.8" />
        <path d="M8.5 4.5v8M4.5 8.5h8" strokeWidth="2" />
      </svg>
    </button>
    <div className="mt-[6px] mr-[21px] ml-auto flex h-[15px] w-[39%] items-stretch">
      <span className="mr-4 flex flex-col justify-center gap-[2px]">
        <i className="size-[2px] bg-[#999]" />
        <i className="size-[2px] bg-[#999]" />
        <i className="size-[2px] bg-[#999]" />
      </span>
      <button aria-label="向左滚动" className="flex w-[15px] items-center justify-center border border-[#ababab] bg-white">
        <Caret className="rotate-90" />
      </button>
      <div className="mr-[2px] ml-px flex-1 bg-[#dadada]">
        <div className="h-full w-[94%] border border-[#ababab] bg-white" />
      </div>
      <button aria-label="向右滚动" className="flex w-[15px] items-center justify-center border border-[#ababab] bg-white">
        <Caret className="-rotate-90" />
      </button>
    </div>
  </div>
);

const StatusBar = () => (
  <footer className="flex h-[22px] items-stretch border-t border-[#c6c6c6] bg-[#f3f3f3] text-[12px] leading-5 text-[#444]">
    <span className="pl-2">就绪</span>
    <span className="ml-auto">平均值: 5864351491</span>
    <span className="ml-4">计数: 76</span>
    <span className="mr-[22px] ml-4">求和: 35186108945</span>
    <button aria-label="普通" className="flex w-[38px] items-center justify-center bg-[#c6c6c6]">
      <svg width="13" height="13" viewBox="0 0 13 13" fill="none" stroke="#555">
        <path d="M.5.5h12v12H.5zM.5 4.5h12M.5 8.5h12M4.5.5v12M8.5.5v12" />
      </svg>
    </button>
    <button aria-label="页面布局" className="flex w-[38px] items-center justify-center">
      <svg width="14" height="13" viewBox="0 0 14 13" fill="none" stroke="#666">
        <path d="M.5.5h13v12H.5zM3.5 2.5h7v8h-7zM5 4.5h4M5 6.5h4M5 8.5h4" />
      </svg>
    </button>
    <button aria-label="分页预览" className="flex w-[38px] items-center justify-center">
      <svg width="14" height="13" viewBox="0 0 14 13" fill="none" stroke="#666">
        <path d="M.5.5h13v12H.5zM4.5.5v8h5v-8" />
      </svg>
    </button>
    <button aria-label="缩小" className="ml-1 flex w-[11px] items-center"><span className="h-[2px] w-[7px] bg-[#555]" /></button>
    <div className="relative flex w-[100px] items-center">
      <input type="range" aria-label="缩放" defaultValue={40} className="absolute inset-0 w-full opacity-0" />
      <span className="h-px w-full bg-[#ababab]" />
      <span className="absolute left-[37px] h-3 w-[5px] bg-[#555]" />
      <span className="absolute left-[50px] h-[5px] w-px bg-[#ababab]" />
    </div>
    <button aria-label="放大" className="ml-1 flex items-center">
      <svg width="8" height="8" viewBox="0 0 8 8" stroke="#555" strokeWidth="2"><path d="M4 0v8M0 4h8" /></svg>
    </button>
    <span className="mr-2 ml-3">80%</span>
  </footer>
);

/* ---------- context menu and floating toolbar ---------- */

const MenuItem = ({ text, k, dots, icon, muted, active }: { text: string; k: string; dots?: boolean; icon?: React.ReactNode; muted?: boolean; active?: boolean }) => (
  <button
    role="menuitem"
    className={`flex w-full items-center text-left text-[12px] ${muted ? "h-6 text-[#aaa]" : "h-[25px] text-[#555]"} ${active ? "bg-[#c6c6c6]" : ""}`}
  >
    <span className="flex w-8 justify-start pl-1">{icon}</span>
    <span>
      {text}(<span className="underline">{k}</span>){dots ? "..." : ""}
    </span>
  </button>
);

const ContextMenu = () => (
  <div role="menu" className="absolute top-[432px] left-2 w-[165px] border border-[#c6c6c6] bg-white pt-px shadow-sm">
    <MenuItem text="剪切" k="T" icon={<CutIcon />} />
    <MenuItem text="复制" k="C" icon={<CopyIcon />} />
    <div className="flex h-6 items-center">
      <span className="flex w-[25px] justify-start pl-1"><PasteIcon size="small" /></span>
      <span className="flex h-full flex-1 items-center bg-[#ebebeb] pl-[7px] text-[12px] font-bold text-[#666]">粘贴选项:</span>
    </div>
    <button aria-label="粘贴" className="flex h-[31px] items-center pl-[30px]">
      <PasteIcon size="medium" />
    </button>
    <MenuItem text="选择性粘贴" k="S" dots muted />
    <div className="mb-px ml-8 h-px bg-[#e1e1e1]" />
    <MenuItem text="插入" k="I" />
    <MenuItem text="删除" k="D" />
    <MenuItem text="清除内容" k="N" />
    <div className="mb-px ml-8 h-px bg-[#e1e1e1]" />
    <MenuItem
      text="设置单元格格式"
      k="F"
      dots
      icon={
        <svg width="15" height="16" viewBox="0 0 15 16" fill="#fff" stroke="#666">
          <path d="M.5.5h14v15H.5z" />
          <path d="M0 0h15v3H0z" fill="#3f79ba" stroke="none" />
          <path d="M8 7.5h4M8 11.5h4M3.5 7.5h2" />
          <circle cx="4.5" cy="11.5" r="1.3" />
        </svg>
      }
    />
    <MenuItem text="行高" k="R" dots />
    <MenuItem text="隐藏" k="H" />
    <MenuItem text="取消隐藏" k="U" active />
  </div>
);

const MiniToolbar = () => (
  <div className="absolute top-[760px] left-2 w-[269px] border border-[#c6c6c6] bg-white px-[2px] pt-[2px] pb-1 shadow-sm">
    <div className="flex items-center">
      <FakeSelect label="字体" value="Arial" width="w-[68px]" />
      <FakeSelect label="字号" value="10" width="w-[50px]" />
      <span className="w-px" />
      <Tool label="增大字号"><GrowFont /></Tool>
      <Tool label="减小字号"><GrowFont down /></Tool>
      <Tool label="会计数字格式"><MoneyIcon /></Tool>
      <CaretButton label="会计数字格式选项" />
      <Tool label="百分比样式"><span className="text-[15px] font-semibold">%</span></Tool>
      <Tool label="千位分隔样式"><span className="pb-2 text-[20px] leading-3 font-bold">,</span></Tool>
      <Tool label="合并后居中"><MergeIcon /></Tool>
    </div>
    <div className="flex items-center pt-px">
      <Tool label="加粗"><b className="text-[13px]">B</b></Tool>
      <Tool label="倾斜"><i className="font-['Liberation_Serif',serif] text-[15px] font-bold">I</i></Tool>
      <Tool label="居中" active><Lines rows={[[2, 14], [5, 10], [8, 14], [11, 10], [14, 14]]} /></Tool>
      <Tool label="填充颜色"><FillIcon /></Tool>
      <CaretButton label="填充颜色选项" />
      <Tool label="字体颜色"><FontColor /></Tool>
      <CaretButton label="字体颜色选项" />
      <Tool label="边框"><BorderIcon /></Tool>
      <CaretButton label="边框选项" />
      <Tool label="增加小数位数"><Decimal up /></Tool>
      <Tool label="减少小数位数"><Decimal /></Tool>
      <Tool label="格式刷"><BrushIcon /></Tool>
    </div>
  </div>
);

/* ---------- taskbar ---------- */

const TaskItem = ({ label, dot, children }: { label: string; dot?: boolean; children: React.ReactNode }) => (
  <button aria-label={label} className="relative flex h-[47px] w-11 items-center justify-center">
    {children}
    {dot && <span className="absolute bottom-1 h-[3px] w-[6px] rounded-full bg-[#7a8f86]" />}
  </button>
);

const Taskbar = () => (
  <div className="grid h-12 grid-cols-[1fr_auto_1fr] items-center border-t border-[#a9c4b8] bg-[#c9eedd] text-[12px] text-[#222]">
    <div className="flex items-center gap-[7px] pb-[2px] pl-[19px]">
      <svg width="24" height="19" viewBox="0 0 24 17">
        <defs>
          <linearGradient id="cloud" x1="0" y1="0" x2="0" y2="1">
            <stop offset="0" stopColor="#b9cdf8" />
            <stop offset="1" stopColor="#7ba0ee" />
          </linearGradient>
        </defs>
        <path d="M5 16a5 5 0 01-.5-9A7 7 0 0117.5 5a5.5 5.5 0 011 11z" fill="url(#cloud)" />
      </svg>
      <p className="leading-[15px]">
        12°C
        <br />
        <span className="text-[#555]">阴</span>
      </p>
    </div>

    <div className="flex items-center">
      <TaskItem label="开始">
        <svg width="23" height="23" viewBox="0 0 23 23">
          <path d="M0 0h11v11H0z" fill="#35b5ee" />
          <path d="M12 0h11v11H12z" fill="#2aa6e8" />
          <path d="M0 12h11v11H0z" fill="#1a8fe0" />
          <path d="M12 12h11v11H12z" fill="#0a78d4" />
        </svg>
      </TaskItem>
      <div className="mr-[3px] ml-[2px] flex h-[30px] w-[219px] items-center rounded-full border border-[#b4cfc3] bg-[#eef8f3] pr-1 pl-[10px]">
        <Search size={16} strokeWidth={2.2} className="text-[#222]" />
        <input aria-label="搜索" placeholder="搜索" className="ml-[9px] w-[90px] bg-transparent text-[14px] placeholder:text-[#555]" />
        <svg width="46" height="26" viewBox="0 0 46 24" className="ml-auto">
          <path d="M2 12C1 5 8 0 15 2c6 2 6 5 2 8-5 5-12 10-15 2z" fill="#efc07a" />
          <ellipse cx="12" cy="7" rx="5" ry="4" fill="#f7d9a4" />
          <path d="M4 12c2 2 7 0 9-4M7 14l6 6M7 20l13-2M12 14l8 7" stroke="#e04a67" strokeWidth="2.5" fill="none" />
          <ellipse cx="35" cy="18" rx="11" ry="4.5" fill="#8f80b8" />
          <path d="M29 3c4-2 10-2 14 0l-2 15H31z" fill="#5c4f7e" />
          <path d="M30 12c4 2 8 2 12 0v4c-4 2-8 2-12 0z" fill="#8e4fb8" />
        </svg>
      </div>
      <TaskItem label="任务视图">
        <svg width="24" height="23" viewBox="0 0 24 23">
          <path d="M0 6h17v17H0z" fill="#222" />
          <path d="M6 0h18v17H6z" fill="#fff" opacity=".8" />
          <path d="M6 6h11v11H6z" fill="#bbb" />
        </svg>
      </TaskItem>
      <TaskItem label="文件资源管理器" dot>
        <svg width="25" height="22" viewBox="0 0 25 22">
          <path d="M0 1q0-1 1-1h8l3 4h12q1 0 1 1v4H0z" fill="#d99a14" />
          <path d="M0 7h10l2-2h13v16q0 1-1 1H1q-1 0-1-1z" fill="#fdc938" />
          <path d="M4 22v-5q0-2 2-2h13q2 0 2 2v5z" fill="#1f7fc9" />
        </svg>
      </TaskItem>
      <TaskItem label="Edge" dot>
        <svg width="24" height="24" viewBox="0 0 24 24">
          <circle cx="12" cy="12" r="12" fill="#1278c8" />
          <path d="M0 11C1 4 6 0 12 0c7 0 12 5 12 10 0 4-3 6-7 6-3 0-3-2-2-3 1-4-2-6-6-6-5 0-8 2-9 4z" fill="#35c1b8" />
          <path d="M12 0c7 0 12 5 12 10 0 4-3 6-7 6-3 0-3-2-2-3 2-6-1-11-3-13z" fill="#5bd07a" />
          <path d="M9 12c-2 5 2 10 7 10 3 0 5-1 6-3-4 1-9-1-9-5z" fill="#c9eedd" />
          <path d="M5 15C5 9 8 7 12 8c-5 3-4 11 3 15-6 1-10-3-10-8z" fill="#0c4f96" />
        </svg>
      </TaskItem>
      <TaskItem label="应用商店">
        <svg width="23" height="24" viewBox="0 0 23 24">
          <path d="M6.5 7V1.5h10V7" fill="none" stroke="#35c3f0" strokeWidth="2" />
          <path d="M0 6h23v15q0 3-3 3H3q-3 0-3-3z" fill="#1c4f8f" />
          <path d="M7 10h4v4H7z" fill="#f25022" />
          <path d="M12 10h4v4h-4z" fill="#7fba00" />
          <path d="M7 15h4v4H7z" fill="#00a4ef" />
          <path d="M12 15h4v4h-4z" fill="#ffb900" />
        </svg>
      </TaskItem>
      <TaskItem label="计算器" dot>
        <svg width="18" height="24" viewBox="0 0 18 24">
          <rect width="18" height="24" rx="1.5" fill="#5b6a75" />
          <path d="M2 2h14v4H2z" fill="#4cc2f1" />
          <path d="M2 8h4v4H2zM7 8h4v4H7zM12 8h4v4h-4zM2 13h4v4H2zM7 13h4v4H7zM2 18h4v4H2zM7 18h4v4H7z" fill="#d5dde2" />
          <path d="M12 13h4v9h-4z" fill="#17508f" />
        </svg>
      </TaskItem>
      <TaskItem label="微信">
        <span className="flex h-10 w-10 flex-col items-center justify-between rounded bg-[#e8aca8] pt-[10px]">
          <svg width="24" height="20" viewBox="0 0 24 20">
            <ellipse cx="9" cy="7.5" rx="9" ry="7.5" fill="#1fd265" />
            <path d="M3 12l-1 5 5-3z" fill="#1fd265" />
            <ellipse cx="17" cy="13" rx="7" ry="6" fill="#ededed" />
            <circle cx="6" cy="6" r="1" fill="#145c31" />
            <circle cx="12" cy="6" r="1" fill="#145c31" />
            <circle cx="15" cy="12" r="1" fill="#888" />
            <circle cx="19" cy="12" r="1" fill="#888" />
          </svg>
          <span className="h-[3px] w-8 rounded-full bg-[#c42b1c]" />
        </span>
      </TaskItem>
      <TaskItem label="Chrome" dot>
        <svg width="24" height="24" viewBox="0 0 24 24">
          <circle cx="12" cy="12" r="12" fill="#fbc116" />
          <path d="M12 12L1.6 6A12 12 0 0122.4 6H12z" fill="#e33b2e" />
          <path d="M1.6 6L7 15l5 3-2 6A12 12 0 011.6 6z" fill="#29a050" />
          <circle cx="12" cy="12" r="6" fill="#fff" />
          <circle cx="12" cy="12" r="4.6" fill="#3c82f0" />
        </svg>
      </TaskItem>
      <TaskItem label="财务" dot>
        <svg width="24" height="24" viewBox="0 0 24 24" fill="none" stroke="#fff" strokeWidth="2">
          <rect width="24" height="24" rx="1.5" fill="#2c5cff" stroke="none" />
          <path d="M7 4l5 6 5-6M6 11h12M6 15.5h12M12 10v11" />
        </svg>
      </TaskItem>
      <TaskItem label="Excel">
        <span className="flex h-10 w-[38px] flex-col items-center justify-between rounded bg-[#e6f6ee] pt-2">
          <svg width="22" height="22" viewBox="0 0 22 22">
            <path d="M10 3.5h11.5v15H10z" fill="#fff" stroke="#217346" />
            <path d="M14 6h2M17 6h3M14 9h2M17 9h3M14 12h2M17 12h3M14 15h2M17 15h3" stroke="#217346" strokeWidth="1.5" />
            <path d="M0 3l13-3v22L0 19z" fill="#1d7044" />
            <path d="M4 7l5 8M9 7l-5 8" stroke="#fff" strokeWidth="2" />
          </svg>
          <span className="h-[3px] w-4 rounded-full bg-[#0a78d4]" />
        </span>
      </TaskItem>
    </div>

    <div className="flex items-center justify-end pr-[18px] pb-[2px]">
      <button aria-label="显示隐藏的图标" className="mr-[17px]"><ChevronUp size={16} strokeWidth={1.8} /></button>
      <svg width="16" height="17" viewBox="0 0 16 17" className="mr-4" fill="none" stroke="#222" strokeWidth="1.3">
        <path d="M1 6a7 7 0 0113-1M14 1v4h-4M2 16v-4h4M2 12l4 4" />
        <circle cx="12" cy="13" r="4" fill="#0a78d4" stroke="none" />
      </svg>
      <span className="mr-[22px] text-[15px]">英</span>
      <span className="mr-[22px] text-[15px]">拼</span>
      <svg width="17" height="16" viewBox="0 0 17 16" className="mr-2" fill="none" stroke="#222" strokeWidth="1.2">
        <path d="M11 1H1v11h11V8M4 15h7M7 12v3M12.5 1h3v4h-3zM14 5v3c0 2-1 3-2 4" />
      </svg>
      <Volume2 size={17} strokeWidth={1.4} className="mr-[14px]" />
      <time className="text-right leading-4">
        14:45
        <br />
        2025/12/16
      </time>
    </div>
  </div>
);

export default function App() {
  return (
    <div className="relative flex min-h-screen flex-col bg-[#e6e6e6] font-['Open_Sans','Noto_Sans_CJK_SC',sans-serif]">
      <TitleBar />
      <RibbonTabs />
      <Ribbon />
      <FormulaBar />
      <main className="flex flex-1 items-stretch">
        <Sheet />
        <VerticalScroll />
      </main>
      <SheetTabs />
      <StatusBar />
      <Taskbar />
      <ContextMenu />
      <MiniToolbar />
    </div>
  );
}
